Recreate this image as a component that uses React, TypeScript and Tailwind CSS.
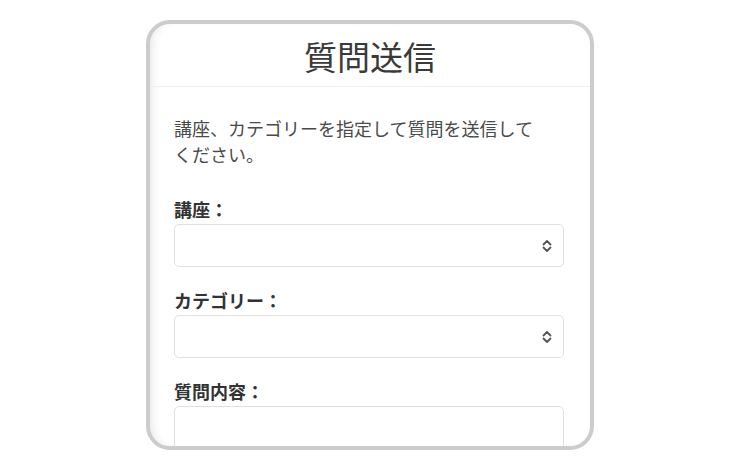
import React from "react";

const font = { fontFamily: '"Noto Sans CJK JP", "Noto Sans", sans-serif' };

function Chevrons() {
  return (
    <svg width="10" height="14" viewBox="0 0 10 14" fill="none" stroke="#555" strokeWidth="1.8" strokeLinecap="round" strokeLinejoin="round">
      <path d="M1.5 5.5 L5 2 L8.5 5.5" />
      <path d="M1.5 8.5 L5 12 L8.5 8.5" />
    </svg>
  );
}

function SelectBox() {
  return (
    <div className="h-[43px] rounded-[5px] border border-[#dfdfdf] bg-white flex items-center justify-end pr-[11px]">
      <Chevrons />
    </div>
  );
}

export default function App() {
  return (
    <div className="w-[740px] h-[470px] bg-white flex justify-center pt-[20px]" style={font}>
      <div className="w-[448px] h-[430px] border-4 border-[#cccccc] rounded-[24px] overflow-hidden bg-white shadow-[inset_8px_0_10px_-6px_rgba(0,0,0,0.10)] flex flex-col">
        <div className="h-[63px] shrink-0 flex items-center justify-center border-b border-[#f0f0f0] text-[33px] text-[#3a3a3a] leading-none pt-[3px]">
          質問送信
        </div>
        <div className="pl-6 pr-[26px] pt-[28px] flex flex-col">
          <p className="text-[18px] leading-[26px] text-[#4a4a4a]">
            講座、カテゴリーを指定して質問を送信して
            <br />
            ください。
          </p>
          <label className="mt-[31px] text-[18px] leading-[22px] font-bold text-[#333]">講座：</label>
          <div className="mt-[4px]">
            <SelectBox />
          </div>
          <label className="mt-[22px] text-[18px] leading-[22px] font-bold text-[#333]">カテゴリー：</label>
          <div className="mt-[4px]">
            <SelectBox />
          </div>
          <label className="mt-[22px] text-[18px] leading-[22px] font-bold text-[#333]">質問内容：</label>
          <div className="mt-[4px] h-[80px] rounded-[5px] border border-[#dfdfdf] bg-white" />
        </div>
      </div>
    </div>
  );
}
